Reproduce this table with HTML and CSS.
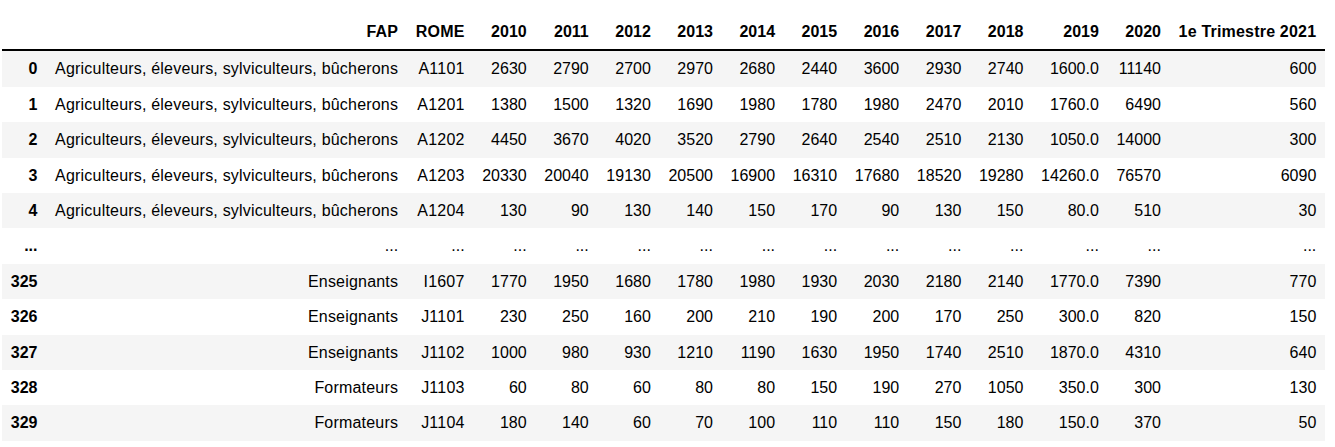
FILE: index.html
```html
<!DOCTYPE html>
<html>
<head>
<meta charset="utf-8">
<link rel="stylesheet" href="styles.css">
</head>
<body>
<table class="dataframe">
<thead>
<tr><th></th><th class="txt">FAP</th><th class="txt">ROME</th><th>2010</th><th>2011</th><th>2012</th><th>2013</th><th>2014</th><th>2015</th><th>2016</th><th>2017</th><th>2018</th><th>2019</th><th>2020</th><th class="txt">1e Trimestre 2021</th></tr>
</thead>
<tbody>
<tr><th>0</th><td class="txt">Agriculteurs, éleveurs, sylviculteurs, bûcherons</td><td class="txt">A1101</td><td>2630</td><td>2790</td><td>2700</td><td>2970</td><td>2680</td><td>2440</td><td>3600</td><td>2930</td><td>2740</td><td>1600.0</td><td>11140</td><td>600</td></tr>
<tr><th>1</th><td class="txt">Agriculteurs, éleveurs, sylviculteurs, bûcherons</td><td class="txt">A1201</td><td>1380</td><td>1500</td><td>1320</td><td>1690</td><td>1980</td><td>1780</td><td>1980</td><td>2470</td><td>2010</td><td>1760.0</td><td>6490</td><td>560</td></tr>
<tr><th>2</th><td class="txt">Agriculteurs, éleveurs, sylviculteurs, bûcherons</td><td class="txt">A1202</td><td>4450</td><td>3670</td><td>4020</td><td>3520</td><td>2790</td><td>2640</td><td>2540</td><td>2510</td><td>2130</td><td>1050.0</td><td>14000</td><td>300</td></tr>
<tr><th>3</th><td class="txt">Agriculteurs, éleveurs, sylviculteurs, bûcherons</td><td class="txt">A1203</td><td>20330</td><td>20040</td><td>19130</td><td>20500</td><td>16900</td><td>16310</td><td>17680</td><td>18520</td><td>19280</td><td>14260.0</td><td>76570</td><td>6090</td></tr>
<tr><th>4</th><td class="txt">Agriculteurs, éleveurs, sylviculteurs, bûcherons</td><td class="txt">A1204</td><td>130</td><td>90</td><td>130</td><td>140</td><td>150</td><td>170</td><td>90</td><td>130</td><td>150</td><td>80.0</td><td>510</td><td>30</td></tr>
<tr><th>...</th><td>...</td><td>...</td><td>...</td><td>...</td><td>...</td><td>...</td><td>...</td><td>...</td><td>...</td><td>...</td><td>...</td><td>...</td><td>...</td><td>...</td></tr>
<tr><th>325</th><td class="txt">Enseignants</td><td class="txt">I1607</td><td>1770</td><td>1950</td><td>1680</td><td>1780</td><td>1980</td><td>1930</td><td>2030</td><td>2180</td><td>2140</td><td>1770.0</td><td>7390</td><td>770</td></tr>
<tr><th>326</th><td class="txt">Enseignants</td><td class="txt">J1101</td><td>230</td><td>250</td><td>160</td><td>200</td><td>210</td><td>190</td><td>200</td><td>170</td><td>250</td><td>300.0</td><td>820</td><td>150</td></tr>
<tr><th>327</th><td class="txt">Enseignants</td><td class="txt">J1102</td><td>1000</td><td>980</td><td>930</td><td>1210</td><td>1190</td><td>1630</td><td>1950</td><td>1740</td><td>2510</td><td>1870.0</td><td>4310</td><td>640</td></tr>
<tr><th>328</th><td class="txt">Formateurs</td><td class="txt">J1103</td><td>60</td><td>80</td><td>60</td><td>80</td><td>80</td><td>150</td><td>190</td><td>270</td><td>1050</td><td>350.0</td><td>300</td><td>130</td></tr>
<tr><th>329</th><td class="txt">Formateurs</td><td class="txt">J1104</td><td>180</td><td>140</td><td>60</td><td>70</td><td>100</td><td>110</td><td>110</td><td>150</td><td>180</td><td>150.0</td><td>370</td><td>50</td></tr>
</tbody>
</table>
</body>
</html>
```
FILE: styles.css
```css
body {
  margin: 0;
  background: #fff;
  font-family: "Liberation Sans", Arial, sans-serif;
  color: #000;
}

.dataframe {
  margin: 14px 0 0 2px;
  border-collapse: collapse;
  border-spacing: 0;
  font-size: 16px;
  line-height: 19.4px;
}

.dataframe th,
.dataframe td {
  padding: 8px 8.8px;
  text-align: right;
  vertical-align: middle;
  white-space: nowrap;
  border: none;
}

.dataframe th {
  font-weight: bold;
}

.dataframe .txt {
  letter-spacing: 0.2px;
}

.dataframe thead tr {
  border-bottom: 2px solid #000;
}

.dataframe tbody tr:nth-child(odd) {
  background: #f5f5f5;
}
```
